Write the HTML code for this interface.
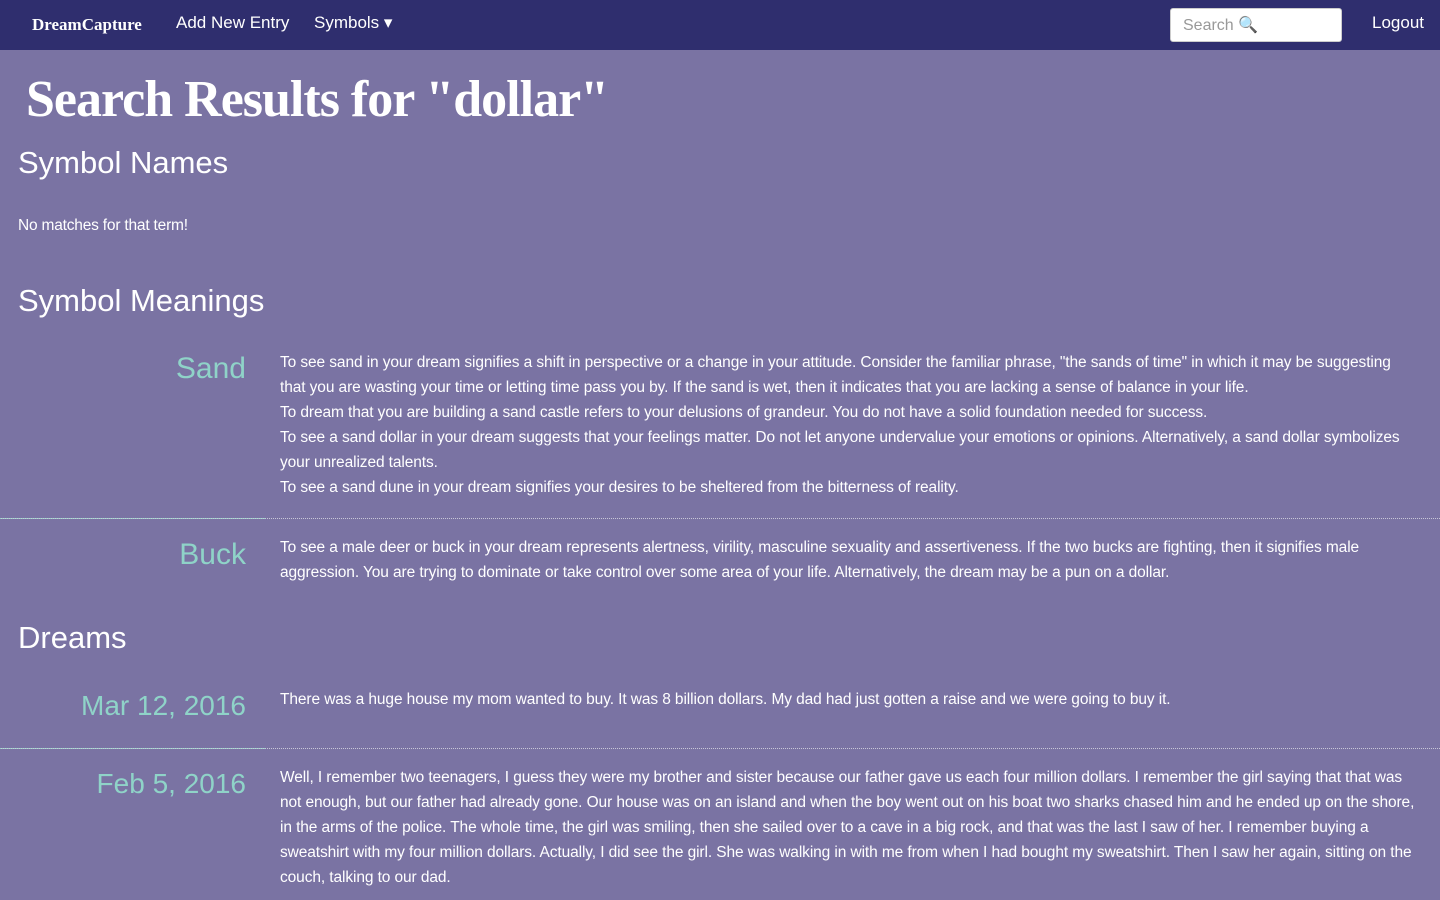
<!DOCTYPE html>
<html><head><meta charset="utf-8"><style>
body{margin:0;background:#7a73a3;color:#fff;font-family:"Liberation Sans",sans-serif;width:1440px;height:900px;overflow:hidden}
.nav{height:50px;background:#2f2e6e;position:relative}
.nav span{position:absolute;top:13px;font-size:17px}
.brand{left:32px;font-family:"Liberation Serif",serif;font-weight:bold;font-size:17px!important;top:15px!important}
.search{position:absolute;left:1170px;top:8px;width:172px;height:34px;background:#fff;border-radius:3px;border:1px solid #ccc;box-sizing:border-box}
.search i{position:absolute;left:12px;top:6px;color:#999;font-style:normal;font-size:16px}
h1{position:absolute;left:26px;top:70px;margin:0;font-family:"Liberation Serif",serif;font-weight:bold;font-size:52px;letter-spacing:-1px}
h2{position:absolute;left:18px;margin:0;font-weight:normal;font-size:31px}
.p{position:absolute;font-size:15.5px;line-height:25px;letter-spacing:-0.2px}
.t{position:absolute;right:1194px;color:#8fd3c8;font-size:30px;text-align:right;white-space:nowrap}
.d{font-size:28px}
.txt{position:absolute;left:280px;width:1135px;font-size:15.5px;line-height:25px;letter-spacing:-0.1px}
.hr{position:absolute;left:0;width:1440px;border-top:1px dotted #c8c8d8}
.hr:before{content:"";position:absolute;left:0;top:-1px;width:265px;border-top:1px dotted #8fd3c8}
</style></head><body>
<div class="nav">
<span class="brand">DreamCapture</span>
<span style="left:176px">Add New Entry</span>
<span style="left:314px">Symbols ▾</span>
<div class="search"><i>Search 🔍</i></div>
<span style="left:1372px">Logout</span>
</div>
<h1>Search Results for "dollar"</h1>
<h2 style="top:145px">Symbol Names</h2>
<div class="p" style="left:18px;top:213px">No matches for that term!</div>
<h2 style="top:283px">Symbol Meanings</h2>
<div class="t" style="top:352px">Sand</div>
<div class="txt" style="top:350px">To see sand in your dream signifies a shift in perspective or a change in your attitude. Consider the familiar phrase, "the sands of time" in which it may be suggesting that you are wasting your time or letting time pass you by. If the sand is wet, then it indicates that you are lacking a sense of balance in your life.<br>To dream that you are building a sand castle refers to your delusions of grandeur. You do not have a solid foundation needed for success.<br>To see a sand dollar in your dream suggests that your feelings matter. Do not let anyone undervalue your emotions or opinions. Alternatively, a sand dollar symbolizes your unrealized talents.<br>To see a sand dune in your dream signifies your desires to be sheltered from the bitterness of reality.</div>
<div class="hr" style="top:518px"></div>
<div class="t" style="top:538px">Buck</div>
<div class="txt" style="top:535px">To see a male deer or buck in your dream represents alertness, virility, masculine sexuality and assertiveness. If the two bucks are fighting, then it signifies male aggression. You are trying to dominate or take control over some area of your life. Alternatively, the dream may be a pun on a dollar.</div>
<h2 style="top:620px">Dreams</h2>
<div class="t d" style="top:690px">Mar 12, 2016</div>
<div class="txt" style="top:687px">There was a huge house my mom wanted to buy. It was 8 billion dollars. My dad had just gotten a raise and we were going to buy it.</div>
<div class="hr" style="top:748px"></div>
<div class="t d" style="top:768px">Feb 5, 2016</div>
<div class="txt" style="top:765px">Well, I remember two teenagers, I guess they were my brother and sister because our father gave us each four million dollars. I remember the girl saying that that was not enough, but our father had already gone. Our house was on an island and when the boy went out on his boat two sharks chased him and he ended up on the shore, in the arms of the police. The whole time, the girl was smiling, then she sailed over to a cave in a big rock, and that was the last I saw of her. I remember buying a sweatshirt with my four million dollars. Actually, I did see the girl. She was walking in with me from when I had bought my sweatshirt. Then I saw her again, sitting on the couch, talking to our dad.</div>
</body></html>
